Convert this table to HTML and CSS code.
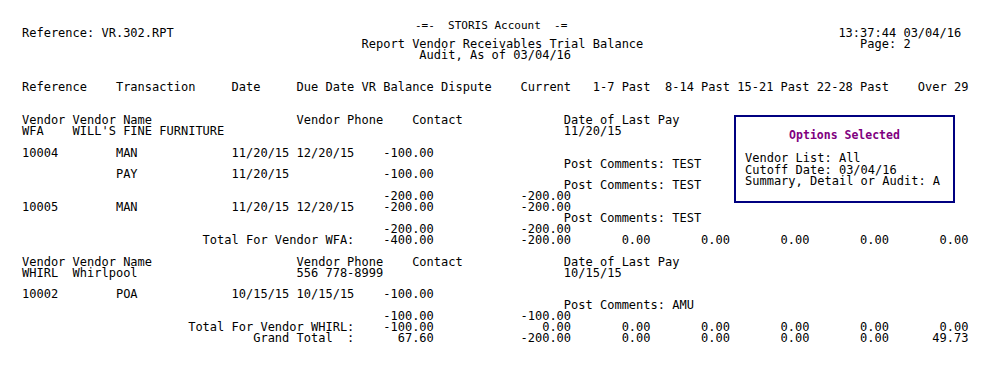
FILE: index.html
```html
<!DOCTYPE html>
<html lang="en">
<head>
<meta charset="utf-8">
<title>Report Vendor Receivables Trial Balance</title>
<link rel="stylesheet" href="styles.css">
</head>
<body>
<div class="page">
<div class="title">-=-  STORIS Account  -=</div>
<div class="report">
<div class="ln">Reference: VR.302.RPT                                                                                            13:37:44 03/04/16</div>
<div class="ln">                                               Report Vendor Receivables Trial Balance                              Page: 2</div>
<div class="ln">                                                       Audit, As of 03/04/16</div>
<div class="gap"></div>
<div class="gap"></div>
<div class="ln">Reference    Transaction     Date     Due Date VR Balance Dispute    Current   1-7 Past  8-14 Past 15-21 Past 22-28 Past    Over 29</div>
<div class="gap"></div>
<div class="gap"></div>
<div class="ln">Vendor Vendor Name                    Vendor Phone    Contact              Date of Last Pay</div>
<div class="ln">WFA    WILL'S FINE FURNITURE                                               11/20/15</div>
<div class="gap"></div>
<div class="ln">10004        MAN             11/20/15 12/20/15    -100.00</div>
<div class="ln">                                                                           Post Comments: TEST</div>
<div class="ln">             PAY             11/20/15             -100.00</div>
<div class="ln">                                                                           Post Comments: TEST</div>
<div class="ln">                                                  -200.00            -200.00</div>
<div class="ln">10005        MAN             11/20/15 12/20/15    -200.00            -200.00</div>
<div class="ln">                                                                           Post Comments: TEST</div>
<div class="ln">                                                  -200.00            -200.00</div>
<div class="ln">                         Total For Vendor WFA:    -400.00            -200.00       0.00       0.00       0.00       0.00       0.00</div>
<div class="gap"></div>
<div class="ln">Vendor Vendor Name                    Vendor Phone    Contact              Date of Last Pay</div>
<div class="ln">WHIRL  Whirlpool                      556 778-8999                         10/15/15</div>
<div class="gap"></div>
<div class="ln">10002        POA             10/15/15 10/15/15    -100.00</div>
<div class="ln">                                                                           Post Comments: AMU</div>
<div class="ln">                                                  -100.00            -100.00</div>
<div class="ln">                       Total For Vendor WHIRL:    -100.00               0.00       0.00       0.00       0.00       0.00       0.00</div>
<div class="ln">                                Grand Total  :      67.60            -200.00       0.00       0.00       0.00       0.00      49.73</div>
</div>
<div class="options">
<div class="opt-title">Options Selected</div>
<div class="opt-body">
<div class="opt-line">Vendor List: All</div>
<div class="opt-line">Cutoff Date: 03/04/16</div>
<div class="opt-line">Summary, Detail or Audit: A</div>
</div>
</div>
</div>
</body>
</html>
```
FILE: styles.css
```css
html, body {
  margin: 0;
  padding: 0;
  background: #ffffff;
}

.page {
  position: relative;
  padding: 19.5px 0 0 22px;
  color: #000000;
  font-family: "DejaVu Sans Mono", "Liberation Mono", monospace;
}

.title {
  white-space: pre;
  font-size: 11px;
  line-height: 11px;
  padding-left: 393px;
  margin-bottom: -2.6px;
}

.report {
  font-size: 12px;
  line-height: 10.9px;
}

.ln {
  white-space: pre;
  width: max-content;
  height: 10.9px;
}

.gap {
  height: 10.9px;
}

.options {
  position: absolute;
  left: 734px;
  top: 115px;
  width: 221px;
  height: 88px;
  box-sizing: border-box;
  border: 2px solid #000080;
  padding-top: 12.5px;
  background: #ffffff;
}

.opt-title {
  text-align: center;
  color: #800080;
  font-weight: bold;
  font-size: 11.5px;
  line-height: 11px;
}

.opt-body {
  margin-top: 12.9px;
  padding-left: 9px;
  font-size: 12px;
  line-height: 11.3px;
}

.opt-line {
  white-space: nowrap;
  height: 11.3px;
}
```
